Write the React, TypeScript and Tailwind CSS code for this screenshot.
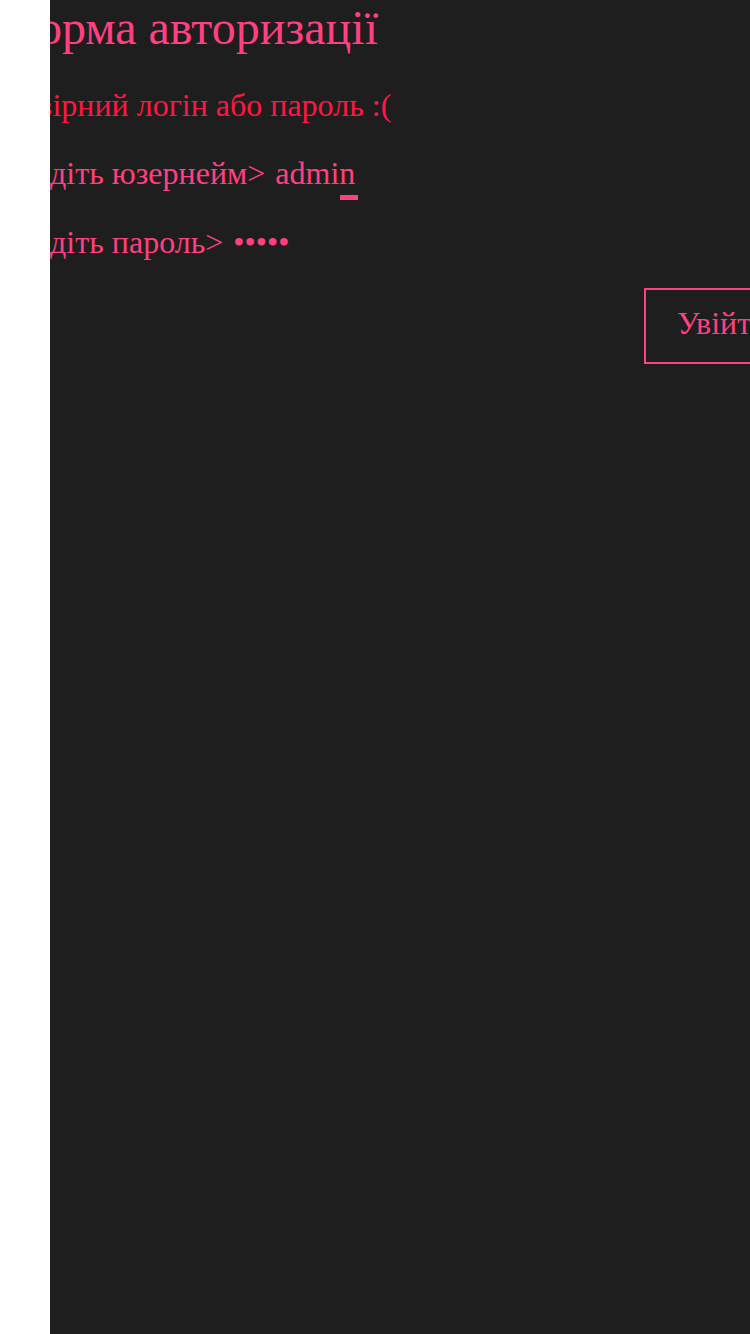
import React from 'react';

const pink = 'text-[#ff4081]';

const Prompt: React.FC<{ label: string; value: string; caret?: boolean }> = ({ label, value, caret }) => {
    return (
        <div className="h-[37px] leading-[37px] text-[32px] text-[#ff4081] whitespace-nowrap">
            <span>{label} </span>
            <span className="relative ml-[2px]">
                {value}
                {caret && <span className="absolute right-[-3px] bottom-[-9px] w-[18px] h-[5px] bg-[#ff4081]" />}
            </span>
        </div>
    );
};

export default function App() {
    return (
        <div className="flex w-[750px] h-[1334px] bg-white overflow-hidden font-['Liberation_Serif',serif]">
            <div className="w-[50px] shrink-0 bg-white" />
            <div className="flex-1 bg-[#1e1e1e] overflow-hidden">
                <div className="-ml-[50px] w-[900px] flex flex-col">
                    <h1 className={`text-[48px] leading-[55px] ${pink} whitespace-nowrap`}>Форма авторизації</h1>
                    <p className="mt-[32px] h-[37px] leading-[37px] text-[32px] text-[#ff1744] whitespace-nowrap">Невірний логін або пароль :(</p>
                    <div className="mt-[31px]">
                        <Prompt label="Введіть юзернейм>" value="admin" caret />
                    </div>
                    <div className="mt-[32px]">
                        <Prompt label="Введіть пароль>" value="•••••" />
                    </div>
                    <div className="mt-[27px] pl-[644px]">
                        <button className={`h-[76px] px-[31px] pb-[6px] border-2 border-[#ff4081] text-[32px] ${pink} bg-transparent`}>Увійти</button>
                    </div>
                </div>
            </div>
        </div>
    );
}
